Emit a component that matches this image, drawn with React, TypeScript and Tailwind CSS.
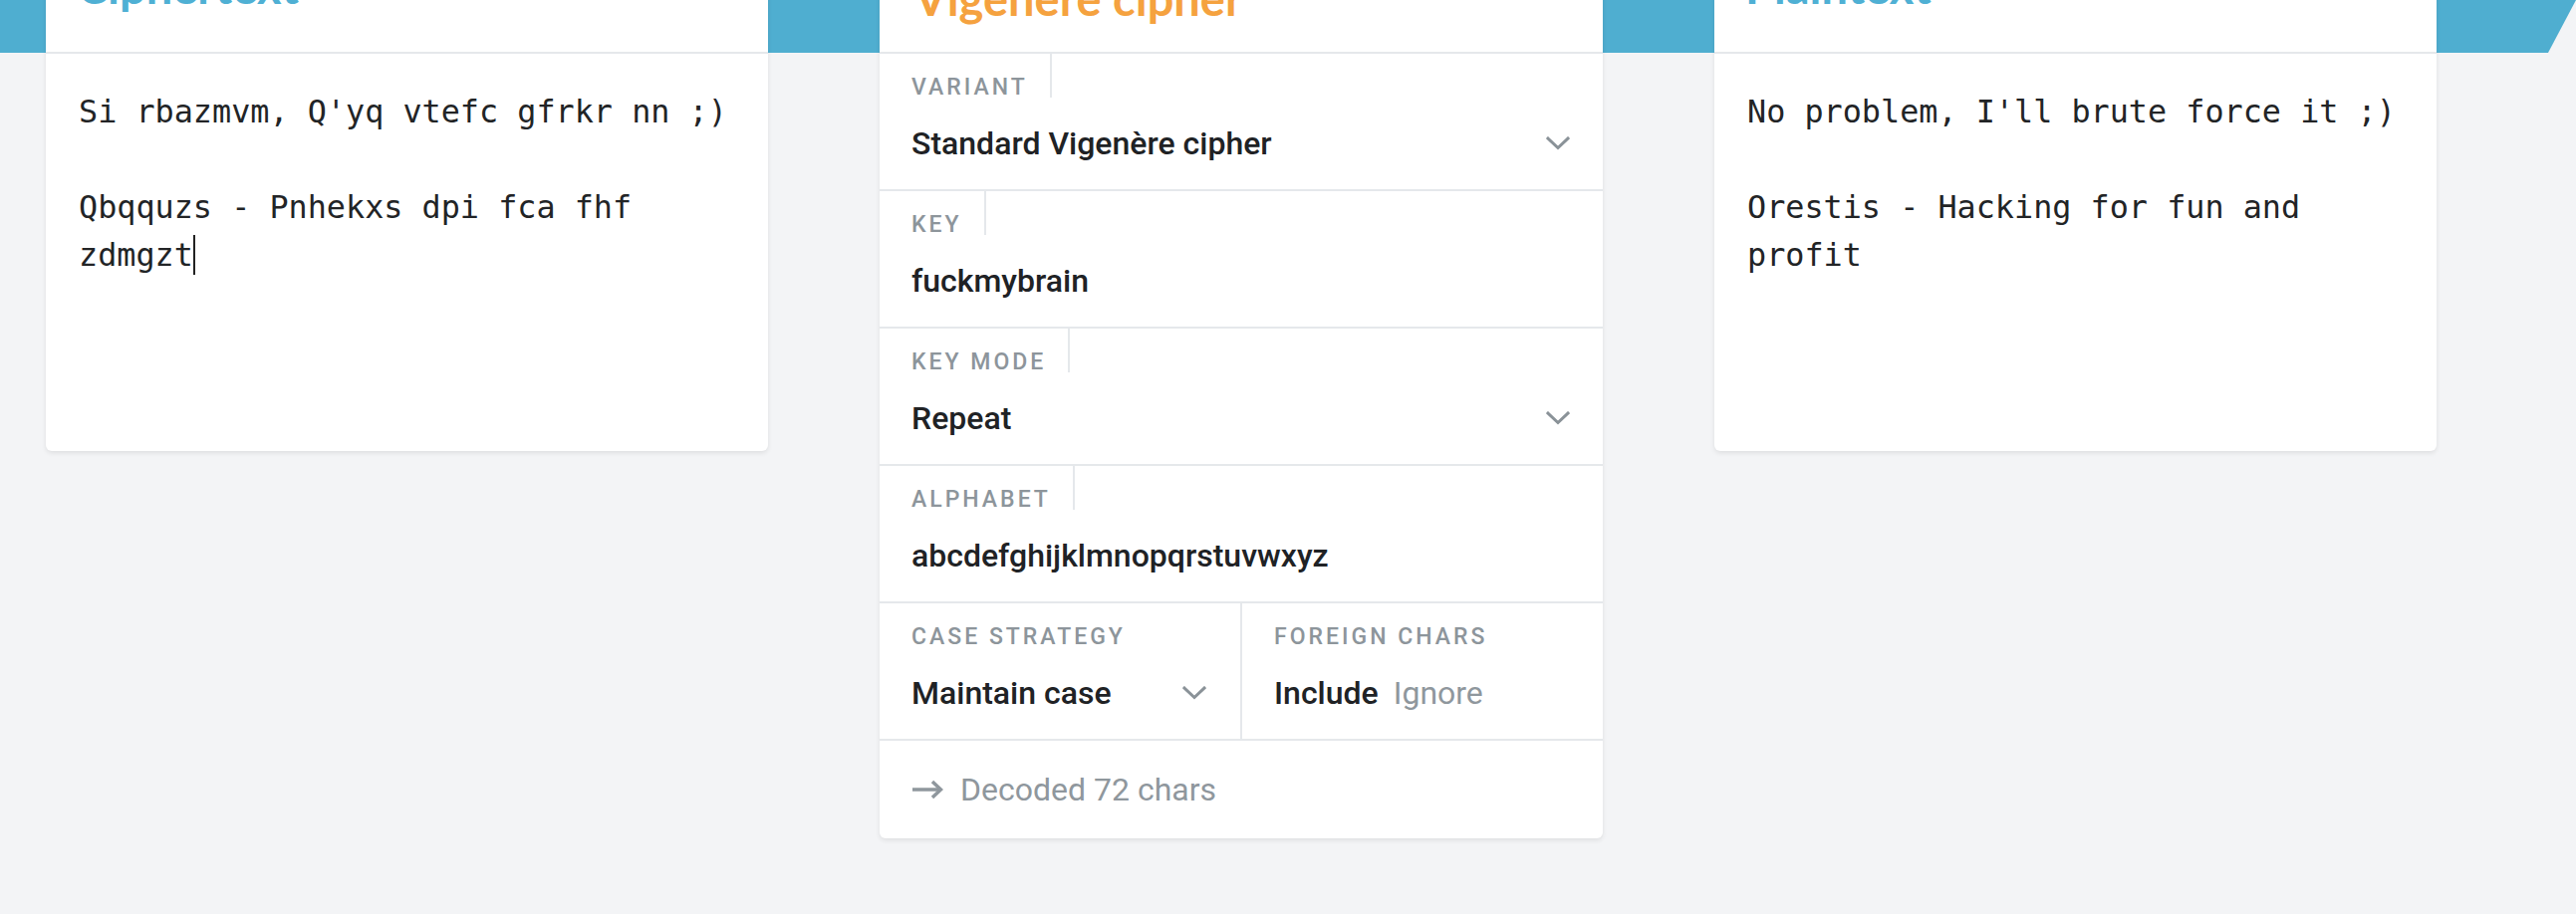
import React from "react";

const Chevron = () => (
  <svg width="24" height="14" viewBox="0 0 24 14" fill="none" className="shrink-0">
    <polyline points="2,2 12,11.5 22,2" stroke="#8a9298" strokeWidth="3" strokeLinecap="square" strokeLinejoin="miter" fill="none" />
  </svg>
);

const Arrow = () => (
  <svg width="32" height="20" viewBox="0 0 32 20" fill="none" className="shrink-0">
    <line x1="1" y1="10" x2="29" y2="10" stroke="#8f979d" strokeWidth="3.5" />
    <polyline points="21,2 29.5,10 21,18" stroke="#8f979d" strokeWidth="3.5" fill="none" />
  </svg>
);

function Label({ children, line = true }: { children: React.ReactNode; line?: boolean }) {
  return (
    <div className="flex">
      <div
        className={
          "pt-[23px] pr-[22px] text-[23px] leading-[21px] font-medium tracking-[3px] text-[#8d959b] uppercase " +
          (line ? "border-r-2 border-[#e5e8eb]" : "")
        }
      >
        {children}
      </div>
    </div>
  );
}

function Row({
  label,
  value,
  chevron = false,
  last = false,
}: {
  label: string;
  value: string;
  chevron?: boolean;
  last?: boolean;
}) {
  return (
    <div className={"pl-[32px] " + (last ? "" : "border-b-2 border-[#e5e8eb]")}>
      <Label>{label}</Label>
      <div className="flex items-center justify-between pt-[26px] pb-[26px] pr-[33px] text-[32px] leading-[40px] font-medium text-[#202225]">
        <span>{value}</span>
        {chevron && <Chevron />}
      </div>
    </div>
  );
}

function TextCard({ title, children }: { title: string; children: React.ReactNode }) {
  return (
    <div className="w-[725px] shrink-0 bg-white rounded-b-[6px] shadow-[0_2px_5px_rgba(0,0,0,0.09)]">
      <div className="h-[114px] border-b-2 border-[#e5e8eb] pl-[31px] pt-[23px] font-['Lato',sans-serif] text-[47px] leading-[47px] font-bold text-[#4fb0d4]">
        {title}
      </div>
      <div className="h-[399px] pt-[34px] pl-[33px] pr-[20px] font-['DejaVu_Sans_Mono',monospace] text-[31.8px] leading-[48px] text-[#222426] whitespace-pre-wrap">
        {children}
      </div>
    </div>
  );
}

export default function App() {
  return (
    <div className="relative min-h-[918px] w-[2586px] overflow-hidden bg-[#f3f4f6] font-['Roboto',sans-serif]">
      <div className="absolute left-0 top-0 h-[53px] w-full bg-[#4faed0] [clip-path:polygon(0_0,100%_0,calc(100%_-_28px)_100%,0_100%)]" />
      <div className="relative flex items-start -mt-[60px] pl-[46px] gap-[112px]">
        <TextCard title="Ciphertext">
          {"Si rbazmvm, Q'yq vtefc gfrkr nn ;)\n\nQbqquzs - Pnhekxs dpi fca fhf zdmgzt"}
          <span className="inline-block w-[2px] h-[40px] align-[-9px] bg-[#222]" />
        </TextCard>

        <div className="w-[726px] shrink-0 bg-white rounded-b-[6px] shadow-[0_2px_5px_rgba(0,0,0,0.09)]">
          <div className="h-[114px] border-b-2 border-[#e5e8eb] pl-[35px] pt-[35px] font-['Lato',sans-serif] text-[47px] leading-[47px] font-bold text-[#f5a23f]">
            Vigenère cipher
          </div>
          <Row label="Variant" value="Standard Vigenère cipher" chevron />
          <Row label="Key" value="fuckmybrain" />
          <Row label="Key mode" value="Repeat" chevron />
          <Row label="Alphabet" value="abcdefghijklmnopqrstuvwxyz" />
          <div className="grid grid-cols-[364px_1fr] border-b-2 border-[#e5e8eb]">
            <div className="pl-[32px] border-r-2 border-[#e5e8eb]">
              <Label line={false}>Case strategy</Label>
              <div className="flex items-center justify-between pt-[26px] pb-[26px] pr-[34px] text-[32px] leading-[40px] font-medium text-[#202225]">
                <span>Maintain case</span>
                <Chevron />
              </div>
            </div>
            <div className="pl-[32px]">
              <Label line={false}>Foreign chars</Label>
              <div className="flex items-center gap-[15px] pt-[26px] pb-[26px] text-[32px] leading-[40px]">
                <span className="font-medium text-[#202225]">Include</span>
                <span className="text-[#8f979d]">Ignore</span>
              </div>
            </div>
          </div>
          <div className="flex h-[98px] items-center gap-[17px] pl-[32px] text-[32px] text-[#8f979d]">
            <Arrow />
            <span>Decoded 72 chars</span>
          </div>
        </div>

        <TextCard title="Plaintext">
          {"No problem, I'll brute force it ;)\n\nOrestis - Hacking for fun and profit"}
        </TextCard>
      </div>
    </div>
  );
}
